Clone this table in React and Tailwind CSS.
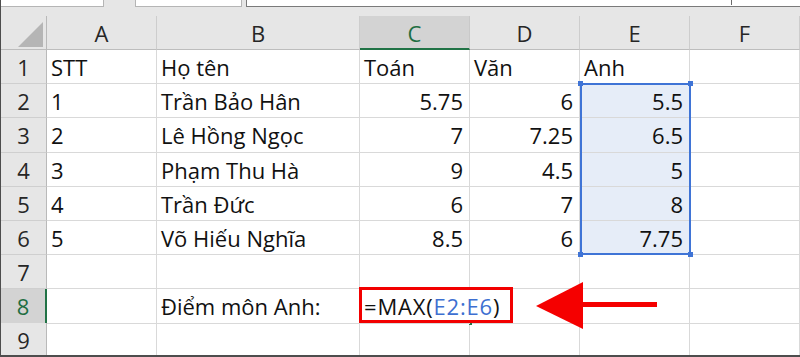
import React from 'react';

const GRID = 'grid grid-cols-[46px_110px_203px_110px_110px_110px_1fr]';
const LETTERS = ['A', 'B', 'C', 'D', 'E', 'F'];

const rows = [
  { n: '1', h: 'h-[34px]', cells: ['STT', 'Họ tên', 'Toán', 'Văn', 'Anh', ''], right: false },
  { n: '2', h: 'h-[34px]', cells: ['1', 'Trần Bảo Hân', '5.75', '6', '5.5', ''], right: true },
  { n: '3', h: 'h-[35px]', cells: ['2', 'Lê Hồng Ngọc', '7', '7.25', '6.5', ''], right: true },
  { n: '4', h: 'h-[34px]', cells: ['3', 'Phạm Thu Hà', '9', '4.5', '5', ''], right: true },
  { n: '5', h: 'h-[34px]', cells: ['4', 'Trần Đức', '6', '7', '8', ''], right: true },
  { n: '6', h: 'h-[34px]', cells: ['5', 'Võ Hiếu Nghĩa', '8.5', '6', '7.75', ''], right: true },
  { n: '7', h: 'h-[34px]', cells: ['', '', '', '', '', ''], right: false },
  { n: '8', h: 'h-[34px]', cells: ['', 'Điểm môn Anh:', 'formula', '', '', ''], right: false },
  { n: '9', h: 'h-[35px]', cells: ['', '', '', '', '', ''], right: false },
];

function ColHeader({ letter }) {
  const active = letter === 'C';
  return (
    <div
      className={
        active
          ? 'bg-[#d3d3d3] text-[#1e6e42] border-r border-[#c9c9c9] border-b-2 border-b-[#217346] flex justify-center pt-[3px]'
          : 'bg-[#e6e6e6] text-[#262626] border-r border-[#cdcdcd] border-b border-b-[#bdbdbd] flex justify-center pt-[3px]'
      }
    >
      {letter}
    </div>
  );
}

function RowHeader({ n }) {
  const active = n === '8';
  return (
    <div
      className={
        active
          ? 'bg-[#d3d3d3] text-[#1e6e42] border-r-2 border-[#217346] border-b border-b-[#bdbdbd] flex justify-center pt-[3px]'
          : 'bg-[#e6e6e6] text-[#262626] border-r border-[#b9b9b9] border-b border-b-[#cfcfcf] flex justify-center pt-[3px]'
      }
    >
      {n}
    </div>
  );
}

function Cell({ value, col, rowN, right }) {
  const selected = col === 4 && ['2', '3', '4', '5', '6'].includes(rowN);
  if (value === 'formula') {
    // text in edit mode spills over D8
    return (
      <div className="relative z-10 border-b border-[#d9d9d9] pl-[4px] pt-[3px] whitespace-nowrap overflow-visible flex items-start tracking-[0.8px]">
        <span>=MAX(</span>
        <span className="text-[#3d6fd1]">E2:E6</span>
        <span>)</span>
        <span className="inline-block w-px h-[30px] bg-[#3a3a3a] ml-[3px] mt-[1px]"></span>
      </div>
    );
  }
  const isNum = right && col >= 2 && col <= 4;
  return (
    <div
      className={
        (selected ? 'bg-[#e6edf8] ' : '') +
        'border-r border-b border-[#d9d9d9] pt-[3px] whitespace-nowrap flex ' +
        (isNum ? 'justify-end pr-[6px]' : 'justify-start pl-[4px]')
      }
    >
      {value}
    </div>
  );
}

export default function App() {
  return (
    <div className="relative w-[800px] h-[357px] overflow-hidden bg-white border-l border-b-2 border-[#4d4d4d] font-['Open_Sans','Liberation_Sans',sans-serif] text-[22px] leading-[28px] text-[#111]">
      {/* formula bar remnants */}
      <div className="flex h-[7px] bg-[#e6e6e6]">
        <div className="w-[103px] bg-white border-r border-b border-[#b5b5b5]"></div>
        <div className="w-[31px]"></div>
        <div className="w-[107px] bg-white border-l border-r border-b border-[#b5b5b5]"></div>
        <div className="w-[4px]"></div>
        <div className="flex-1 bg-white border-l border-b border-[#7a7a7a] flex">
          <div className="ml-[484px] w-px h-[5px] bg-[#6b6b6b]"></div>
        </div>
      </div>
      <div className="h-[9px] bg-[#e6e6e6]"></div>

      {/* column headers */}
      <div className={GRID + ' h-[34px]'}>
        <div className="bg-[#e6e6e6] border-r border-[#b9b9b9] border-b border-b-[#bdbdbd] flex items-end justify-end pr-[3px] pb-[2px]">
          <svg width="25" height="25" viewBox="0 0 25 25">
            <polygon points="25,0 25,25 0,25" fill="#b5b5b5" />
          </svg>
        </div>
        {LETTERS.map(l => (
          <ColHeader key={l} letter={l} />
        ))}
      </div>

      {/* body */}
      {rows.map(r => (
        <div key={r.n} className={GRID + ' ' + r.h}>
          <RowHeader n={r.n} />
          {r.cells.map((v, i) => (
            <Cell key={i} value={v} col={i} rowN={r.n} right={r.right} />
          ))}
        </div>
      ))}

      {/* range selection E2:E6 */}
      <div className="absolute left-[579px] top-[83px] w-[111px] h-[172px] border-2 border-[#3f74d6]"></div>
      <div className="absolute left-[577px] top-[81px] w-[5px] h-[5px] bg-[#3f74d6]"></div>
      <div className="absolute left-[687px] top-[81px] w-[5px] h-[5px] bg-[#3f74d6]"></div>
      <div className="absolute left-[577px] top-[252px] w-[5px] h-[5px] bg-[#3f74d6]"></div>
      <div className="absolute left-[687px] top-[252px] w-[5px] h-[5px] bg-[#3f74d6]"></div>

      {/* active cell fill handle */}
      <div className="absolute left-[468px] top-[322px] w-[3px] h-[3px] bg-[#217346]"></div>

      {/* red annotation box */}
      <div className="absolute z-20 left-[358px] top-[287px] w-[154px] h-[36px] border-[3px] border-[#f20000]"></div>

      {/* red arrow */}
      <svg className="absolute left-[530px] top-[278px]" width="130" height="55" viewBox="530 278 130 55">
        <polygon points="535,306 582,282 582,329" fill="#f50000" />
        <rect x="580" y="302" width="76" height="5" fill="#f50000" />
      </svg>
    </div>
  );
}
